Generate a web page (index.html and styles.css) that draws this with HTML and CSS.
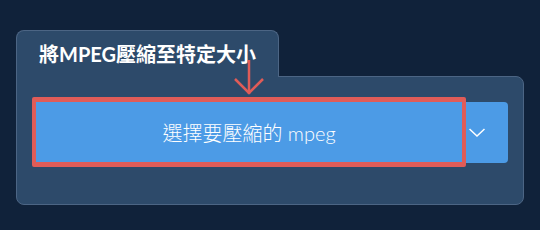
FILE: index.html
```html
<!doctype html>
<html>
  <head>
    <title>MPEG Compressor</title>
    <link rel="stylesheet" href="styles.css">
  </head>
  <body>
    <div class="card">
      <div class="tab">
        <h1>將MPEG壓縮至特定大小</h1>
      </div>
      <div class="panel">
        <div class="split-button">
          <button class="main-button">選擇要壓縮的 mpeg</button>
          <button class="dropdown-button" aria-label="more">
            <svg width="16" height="9" viewBox="0 0 16 9">
              <polyline points="0.5,1 8,8 15.5,1" fill="none" stroke="#fff" stroke-width="1.5" />
            </svg>
          </button>
          <div class="highlight"></div>
        </div>
      </div>
      <svg class="pointer" width="34" height="42" viewBox="0 0 34 42">
        <line x1="17" y1="4" x2="17" y2="38" stroke="#e05c58" stroke-width="2.5" />
        <polyline points="3,23 17,37 31,23" fill="none" stroke="#e05c58" stroke-width="2.5" />
      </svg>
    </div>
  </body>
</html>
```

FILE: styles.css
```css
body {
  margin: 0;
  padding: 30px 16px 0 16px;
  background-color: #10223a;
  font-family: Lato, "Noto Sans CJK TC", sans-serif;
  color: #fff;
}

.card {
  position: relative; /* anchor for the pointer annotation */
  width: 508px;
}

.tab {
  position: relative;
  z-index: 1; /* covers the panel's top border under the tab */
  display: inline-flex;
  align-items: center;
  height: 47px;
  padding: 0 22px 1px 22px;
  margin-bottom: -1px;
  background-color: #2d4a6a;
  border: 1px solid #4c6584;
  border-bottom: none;
  border-radius: 8px 8px 0 0;
  box-sizing: border-box;
}

.tab h1 {
  margin: 0;
  font-size: 20px;
  font-weight: 700;
  line-height: 24px;
  padding-top: 1px;
}

.panel {
  background-color: #2d4a6a;
  border: 1px solid #4c6584;
  border-radius: 0 8px 8px 8px;
  padding: 25px 15px 41px 15px;
}

.split-button {
  position: relative;
  display: flex;
  height: 61px;
}

button {
  border: none;
  background-color: #4c9be6;
  color: #fff;
  font-family: inherit;
  cursor: pointer;
}

.main-button {
  flex: 1;
  font-size: 20px;
  font-weight: 300;
  border-radius: 3px 0 0 3px;
  padding: 0;
}

.dropdown-button {
  width: 42px;
  display: flex;
  align-items: center;
  justify-content: flex-start;
  padding: 0 0 0 3px;
  border-radius: 0 4px 4px 0;
}

.dropdown-button svg {
  display: block;
}

/* red annotation frame */
.highlight {
  position: absolute;
  top: -5px;
  bottom: -4px;
  left: 0;
  right: 42px;
  border: 5px solid #e05c58;
  border-left-width: 4.7px;
  border-right-width: 4.7px;
  border-radius: 2px;
  pointer-events: none;
}

.pointer {
  position: absolute;
  left: 216px;
  top: 26px;
  z-index: 2;
}
```
